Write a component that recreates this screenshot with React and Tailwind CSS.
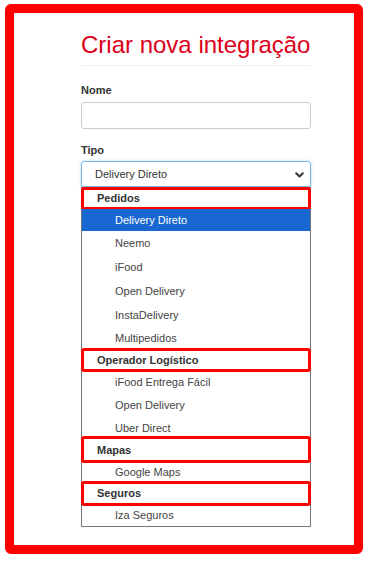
import React from "react";

// red annotation boxes are drawn as outlines on the group rows
const rows = [
  { label: "Pedidos", group: true, h: "h-[21px]" },
  { label: "Delivery Direto", selected: true, h: "h-[22px]" },
  { label: "Neemo", h: "h-[24px]" },
  { label: "iFood", h: "h-[24px]" },
  { label: "Open Delivery", h: "h-[24px]" },
  { label: "InstaDelivery", h: "h-[24px]" },
  { label: "Multipedidos", h: "h-[22px]" },
  { label: "Operador Logístico", group: true, h: "h-[22px]" },
  { label: "iFood Entrega Fácil", h: "h-[22px]" },
  { label: "Open Delivery", h: "h-[24px]" },
  { label: "Uber Direct", h: "h-[20px] pt-[3px]" },
  { label: "Mapas", group: true, h: "h-[25px] pt-[2px]" },
  { label: "Google Maps", h: "h-[20px]" },
  { label: "Seguros", group: true, h: "h-[23px]" },
  { label: "Iza Seguros", h: "h-[21px]" },
];

function Row({ row }) {
  if (row.group) {
    return (
      <div
        className={`${row.h} flex items-center pl-[15px] font-bold text-[#333] outline-[3px] outline-solid outline-[#ff0000] outline-offset-[-2px] rounded-[2px]`}
      >
        {row.label}
      </div>
    );
  }
  return (
    <div
      className={`${row.h} flex items-center pl-[33px] ${
        row.selected ? "bg-[#1967d2] text-white" : "text-[#444]"
      }`}
    >
      {row.label}
    </div>
  );
}

export default function App() {
  return (
    <div
      className="w-[370px] h-[561px] bg-white pt-[4px] pl-[5px] overflow-hidden"
      style={{ fontFamily: '"Liberation Sans", Arial, sans-serif' }}
    >
      <div className="w-[358px] h-[550px] border-[9px] border-[#ff0000] rounded-[6px] pl-[67px] pt-[19px]">
        <div className="w-[230px]">
          <h3 className="text-[24px] leading-[26px] text-[#dc0018] whitespace-nowrap">
            Criar nova integração
          </h3>
          <div className="mt-[7px] h-px bg-[#eeeeee]" />

          <label className="block mt-[16px] text-[11px] leading-[16px] font-bold text-[#333]">
            Nome
          </label>
          <div className="mt-[4px] h-[27px] border border-[#cccccc] rounded-[3px] bg-white" />

          <label className="block mt-[13px] text-[11px] leading-[16px] font-bold text-[#333]">
            Tipo
          </label>
          <div className="mt-[3px] h-[26px] border border-[#80b3e6] rounded-t-[3px] shadow-[0_0_3px_rgba(102,175,233,0.5)] flex items-center justify-between pl-[13px] pr-[6px] text-[11px] text-[#333]">
            <span>Delivery Direto</span>
            <svg width="9" height="6" viewBox="0 0 9 6" className="mt-[1px]">
              <path
                d="M1.2 1.2 L4.5 4.5 L7.8 1.2"
                fill="none"
                stroke="#333"
                strokeWidth="2"
                strokeLinecap="round"
                strokeLinejoin="round"
              />
            </svg>
          </div>

          <div className="flex flex-col border border-[#767676] text-[11px] bg-white">
            {rows.map((row, i) => (
              <Row key={i} row={row} />
            ))}
          </div>
        </div>
      </div>
    </div>
  );
}
